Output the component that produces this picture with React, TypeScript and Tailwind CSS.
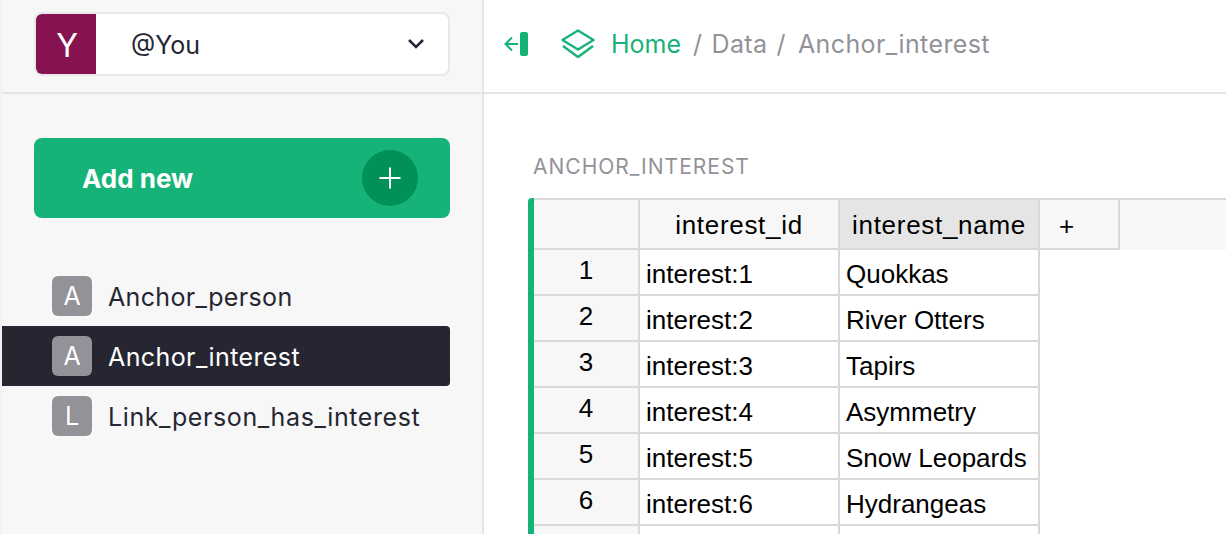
const inter = 'font-["Inter",sans-serif]';
const liber = 'font-["Liberation_Sans",Arial,sans-serif]';

const pages = [
  { l: "A", n: "Anchor_person", active: false, track: "tracking-[0.35px]" },
  { l: "A", n: "Anchor_interest", active: true, track: "tracking-[0.4px]" },
  { l: "L", n: "Link_person_has_interest", active: false, track: "tracking-[0.6px]" },
];

const rows = [
  ["interest:1", "Quokkas"],
  ["interest:2", "River Otters"],
  ["interest:3", "Tapirs"],
  ["interest:4", "Asymmetry"],
  ["interest:5", "Snow Leopards"],
  ["interest:6", "Hydrangeas"],
  ["", ""],
];

function Collapse() {
  return (
    <svg width="26" height="26" viewBox="0 0 26 26" fill="none" className="shrink-0">
      <rect x="17" y="1" width="8" height="24" rx="2" fill="#16B378" />
      <path d="M15 13H3M9 6.5L2.5 13L9 19.5" stroke="#16B378" strokeWidth="2" />
    </svg>
  );
}

function Layers() {
  return (
    <svg width="34" height="30" viewBox="0 0 34 30" fill="none" className="shrink-0">
      <path d="M17 1.5L32.5 11L17 20.5L1.5 11Z" stroke="#16B378" strokeWidth="2.4" strokeLinejoin="round" />
      <path d="M2 17L17 28L32 17" stroke="#16B378" strokeWidth="2.4" strokeLinejoin="round" />
    </svg>
  );
}

export default function App() {
  return (
    <div className={`flex h-[534px] w-[1226px] overflow-hidden bg-white ${inter}`}>
      <aside className="flex w-[484px] shrink-0 flex-col border-l-2 border-r-2 border-l-[#f1f1f1] border-r-[#e5e5e5] bg-[#f7f7f7]">
        <div className="flex h-[94px] shrink-0 items-start border-b-2 border-[#e5e5e5] pl-[32px] pt-[12px]">
          <div className="flex h-[64px] w-[416px] items-center rounded-[8px] border-2 border-[#e8e8e8] bg-white">
            <div className="flex h-[60px] w-[60px] items-center justify-center rounded-l-[6px] bg-[#86134f] pl-[2px] pt-[4px] text-[32px] text-white">Y</div>
            <span className="ml-[35px] pt-[4px] text-[25px] text-[#262633]">@You</span>
            <svg width="20" height="12" viewBox="0 0 20 12" fill="none" className="ml-auto mr-[22px]">
              <path d="M3 2L10 9L17 2" stroke="#262633" strokeWidth="2.6" />
            </svg>
          </div>
        </div>
        <div className="ml-[32px] mt-[44px] flex h-[80px] w-[416px] shrink-0 items-center justify-between rounded-[8px] bg-[#16b378] pl-[48px] pr-[32px]">
          <span className="text-[26px] font-bold text-white">Add new</span>
          <span className="flex h-[56px] w-[56px] items-center justify-center rounded-full bg-[#009058]">
            <svg width="24" height="24" viewBox="0 0 24 24" fill="none">
              <path d="M12 1.5V22.5M1.5 12H22.5" stroke="white" strokeWidth="2" />
            </svg>
          </span>
        </div>
        <div className="mt-[48px] flex flex-col">
          {pages.map((p) => (
            <div
              key={p.n}
              className={`flex h-[60px] w-[448px] items-center rounded-r-[4px] pl-[50px] ${p.active ? "bg-[#262633] text-white" : "text-[#262633]"}`}
            >
              <span className="flex h-[40px] w-[40px] items-center justify-center rounded-[6px] bg-[#929299] pt-[2px] text-[25px] text-white">{p.l}</span>
              <span className={`ml-[16px] pt-[4px] text-[25px] ${p.track}`}>{p.n}</span>
            </div>
          ))}
        </div>
      </aside>

      <main className="flex min-w-0 flex-1 flex-col">
        <header className="flex h-[94px] shrink-0 items-center border-b-2 border-[#e5e5e5] pb-[4px] pl-[19px] text-[25px] text-[#929299]">
          <Collapse />
          <span className="ml-[32px]"><Layers /></span>
          <div className="ml-[16px] mt-[2px] flex tracking-[0.4px]">
            <span className="tracking-normal text-[#16b378]">Home</span>
            <span className="ml-[12px]">/</span>
            <span className="ml-[9px]">Data</span>
            <span className="ml-[9px]">/</span>
            <span className="ml-[12px]">Anchor_interest</span>
          </div>
        </header>

        <div className="flex min-h-0 flex-1 flex-col pl-[44px]">
          <div className="mt-[61px] h-[24px] pl-[5px] text-[21px] uppercase leading-[24px] tracking-[1px] text-[#929299]">Anchor_interest</div>
          <div className={`mt-[19px] rounded-tl-[4px] border-l-[6px] border-[#16b378] text-[26px] text-black ${liber}`}>
            <div className="flex h-[52px] border-t-2 border-[#d9d9d9] bg-[#f7f7f7]">
              <div className="w-[106px] border-b-2 border-r-2 border-[#d9d9d9]" />
              <div className="flex w-[200px] items-center justify-center border-b-2 border-r-2 border-[#d9d9d9] pt-[2px] tracking-[0.7px]">interest_id</div>
              <div className="flex w-[200px] items-center justify-center border-b-2 border-r-2 border-[#d9d9d9] bg-[#e5e5e5] pt-[2px] tracking-[0.7px]">interest_name</div>
              <div className="flex w-[80px] items-center border-b-2 border-r-2 border-[#d9d9d9] pl-[19px] pt-[4px]">+</div>
            </div>
            {rows.map((r, i) => (
              <div key={i} className="flex h-[46px]">
                <div className="flex w-[106px] items-center justify-center border-b-2 border-r-2 border-[#d9d9d9] bg-[#f7f7f7] pb-[3px]">{i + 1 < 7 ? i + 1 : ""}</div>
                <div className="flex w-[200px] items-center border-b-2 border-r-2 border-[#d9d9d9] pl-[6px] pt-[4px]">{r[0]}</div>
                <div className="flex w-[200px] items-center border-b-2 border-r-2 border-[#d9d9d9] pl-[6px] pt-[4px]">{r[1]}</div>
              </div>
            ))}
          </div>
        </div>
      </main>
    </div>
  );
}
